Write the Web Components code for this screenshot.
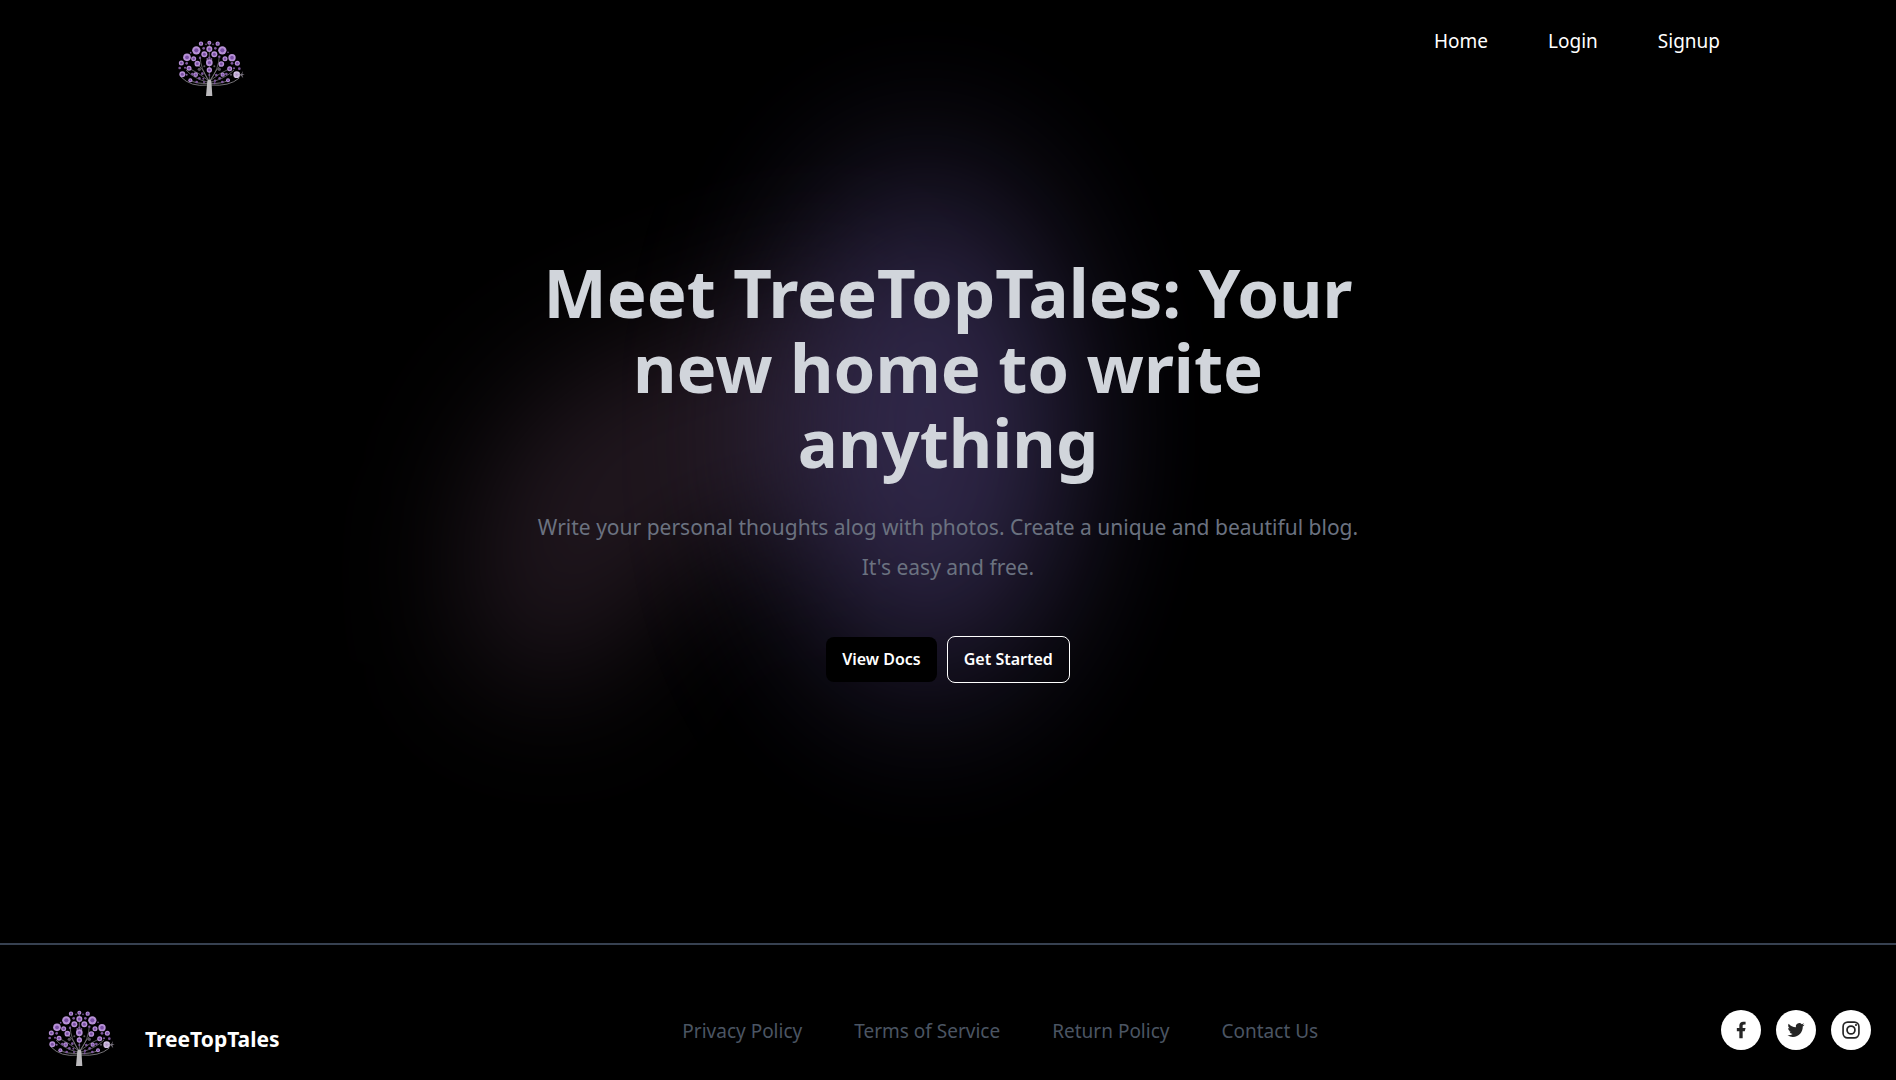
<!DOCTYPE html>
<html lang="en">
<head>
<meta charset="utf-8">
<meta name="viewport" content="width=device-width, initial-scale=1">
<title>TreeTopTales</title>
<style>
  body { margin: 0; background: #000; color: #fff; font-family: "Noto Sans", "Open Sans", sans-serif; }
</style>
</head>
<body>
<ttt-page>
  <ttt-nav slot="header"></ttt-nav>
  <ttt-hero>
    <span slot="title">Meet TreeTopTales: Your new home to write anything</span>
    <span slot="text">Write your personal thoughts alog with photos. Create a unique and beautiful blog. It's easy and free.</span>
    <ttt-button slot="actions">View Docs</ttt-button>
    <ttt-button slot="actions" outline>Get Started</ttt-button>
  </ttt-hero>
  <ttt-footer slot="footer"></ttt-footer>
</ttt-page>

<script>
  function define(name, html) {
    const template = document.createElement('template');
    template.innerHTML = html;
    customElements.define(name, class extends HTMLElement {
      constructor() {
        super();
        this.attachShadow({ mode: 'open' }).appendChild(template.content.cloneNode(true));
      }
    });
  }

  // Blossoms of the tree logo: x, y, radius
  const blossoms = [
    [123,56,6.5],[148,53,6],[173,56,6.5],[109,76,12.5],[148,72,9],[187,76,12.5],[133,88,9],[163,88,9],
    [81,97,11.5],[101,101,7.5],[195,101,7.5],[216,98,11],[64,114,7.5],[148,113,10],[112,116,8.5],[184,117,8.5],
    [232,115,7.5],[87,130,7.5],[148,135,8],[209,131,7.5],[67,148,9],[107,149,7],[188,149,6.5],[91,166,6],[204,166,6]
  ];
  const buds = [
    [59,129,4],[238,131,4],[131,70,4],[166,70,4],[92,83,2.5],[204,82,2.5],[120,99,3.5],[178,95,3.5],[138,58,2.5],[159,58,2.5],
    [80,115,4],[216,115,4],[97,147,4],[199,147,4],[127,146,4],[169,150,4],[118,160,4],[179,160,4],[110,171,4],[187,171,4],
    [130,161,3],[165,167,3.5],[75,128,3],[222,130,3],[148,98,3.5],[142,102,3],[154,102,3],[80,149,3],[132,171,3],[164,175,3],[148,150,3]
  ];
  const greyBuds = [[118,133,5],[178,133,5],[133,124,3],[163,124,3],[213,149,3]];
  const circle = (fill) => ([x, y, r]) => `<circle cx="${x}" cy="${y}" r="${r}" fill="${fill}"/>`;

  define('ttt-tree', `
    <style>
      :host { display: block; width: 67px; height: 57px; }
      svg { display: block; width: 100%; height: 100%; }
    </style>
    <svg viewBox="54 45 201 171" role="img" aria-label="TreeTopTales tree">
      <g fill="none" stroke="#8b888e" stroke-width="2">
        <path d="M146 172Q102 162 78 135M150 172Q194 162 222 135M146 168Q122 132 120 94M150 168Q176 132 178 94M147 168Q132 135 112 116M149 168Q168 135 184 117M147 168Q116 143 87 130M149 168Q180 143 209 131M148 168V60"/>
        <path d="M144 180Q92 187 62 155M152 180Q208 185 238 159M144 175Q110 177 91 166M152 175Q184 177 204 166" stroke-width="2.5"/>
      </g>
      <path d="M142 168L145 164H151L154 168L157 213H138Z" fill="#bcbabd"/>
      ${greyBuds.map(circle('#5d5562')).join('')}
      ${buds.map(circle('#7f599e')).join('')}
      ${blossoms.map(circle('#b791d6')).join('')}
      ${blossoms.map(([x, y, r]) => [x, y, r * .5]).map(circle('#7a4fa5')).join('')}
      <circle cx="230" cy="149" r="10" fill="#d4c4e4"/>
      <path d="M223 149H237M230 142V156M225 144L235 154M235 144L225 154" stroke="#a788c0" stroke-width="1.5"/>
      <path d="M237 149L244 146L249 138L247 147L254 148L247 151L250 160L243 152Z" fill="#77717c"/>
    </svg>`);

  define('ttt-nav', `
    <style>
      :host { display: block; }
      header { display: flex; align-items: flex-start; justify-content: space-between; max-width: 1544px; margin: 0 auto; padding: 25px 0 0; }
      ttt-tree { margin: 15px 0 0 2px; }
      nav { display: flex; gap: 60px; }
      a { color: #fff; text-decoration: none; font-size: 19px; line-height: 32px; }
    </style>
    <header>
      <ttt-tree></ttt-tree>
      <nav aria-label="Main">
        <a href="#home">Home</a>
        <a href="#login">Login</a>
        <a href="#signup">Signup</a>
      </nav>
    </header>`);

  define('ttt-button', `
    <style>
      :host { display: block; }
      button { display: block; margin: 0; padding: 10px 16px; border: 0; border-radius: 8px; background: #000; color: #fff;
               font: 600 16px/25px "Noto Sans", "Open Sans", sans-serif; cursor: pointer; }
      :host([outline]) button { border: 1px solid #fff; background: transparent; }
    </style>
    <button type="button"><slot></slot></button>`);

  define('ttt-glow', `
    <style>
      :host { display: block; position: absolute; inset: 0; z-index: -1; overflow: hidden; pointer-events: none; }
      svg { display: block; width: 100%; height: 100%; overflow: visible; }
    </style>
    <svg viewBox="0 0 1896 944" preserveAspectRatio="xMidYMid meet" aria-hidden="true">
      <defs>
        <filter id="soft" x="-150%" y="-100%" width="400%" height="300%" color-interpolation-filters="sRGB"><feGaussianBlur stdDeviation="74 92"/></filter>
        <filter id="wide" x="-100%" y="-100%" width="300%" height="300%" color-interpolation-filters="sRGB"><feGaussianBlur stdDeviation="66"/></filter>
      </defs>
      <path d="M480 660Q430 440 610 360L860 270L930 530Q740 500 680 570Q620 610 580 700Z" fill="#21171f" filter="url(#wide)"/>
      <ellipse cx="926" cy="430" rx="150" ry="250" fill="#342b50" opacity=".9" filter="url(#soft)"/>
    </svg>`);

  define('ttt-hero', `
    <style>
      :host { display: block; }
      section { display: flex; flex-direction: column; align-items: center; max-width: 840px; margin: 0 auto; text-align: center; }
      h1 { margin: 0; color: #d1d5db; font-size: 67px; line-height: 75px; font-weight: 700; }
      p { margin: 27px 0 0; color: #6b7280; font-size: 21px; line-height: 40px; }
      .actions { display: flex; align-items: center; gap: 10px; margin-top: 49px; }
    </style>
    <section>
      <h1><slot name="title"></slot></h1>
      <p><slot name="text"></slot></p>
      <div class="actions"><slot name="actions"></slot></div>
    </section>`);

  define('ttt-social', `
    <style>
      :host { display: flex; gap: 15px; }
      a { display: flex; align-items: center; justify-content: center; width: 40px; height: 40px; border-radius: 50%; background: #fff; color: #252525; }
      svg { display: block; width: 20px; height: 20px; fill: currentColor; }
    </style>
    <a href="#facebook" aria-label="Facebook"><svg viewBox="0 0 24 24"><path d="M14 13.5h2.5l1-4H14v-2c0-1.03 0-2 2-2h1.500V2.140C17.174 2.097 15.943 2 14.643 2 11.928 2 10 3.657 10 6.700v2.800H7v4h3V22h4v-8.500z"/></svg></a>
    <a href="#twitter" aria-label="Twitter"><svg viewBox="0 0 24 24"><path d="M22.162 5.656a8.384 8.384 0 0 1-2.402.658A4.196 4.196 0 0 0 21.600 4c-.820.488-1.719.830-2.656 1.015a4.182 4.182 0 0 0-7.126 3.814 11.874 11.874 0 0 1-8.620-4.370 4.168 4.168 0 0 0-.566 2.103c0 1.450.738 2.731 1.860 3.481a4.168 4.168 0 0 1-1.894-.523v.052a4.185 4.185 0 0 0 3.355 4.101 4.210 4.210 0 0 1-1.890.072A4.185 4.185 0 0 0 7.970 16.650a8.394 8.394 0 0 1-6.191 1.732 11.830 11.830 0 0 0 6.410 1.880c7.693 0 11.900-6.373 11.900-11.900 0-.180-.005-.362-.013-.540a8.496 8.496 0 0 0 2.087-2.165z"/></svg></a>
    <a href="#instagram" aria-label="Instagram"><svg viewBox="0 0 24 24"><path fill-rule="evenodd" d="M8 1.500h8A6.500 6.500 0 0 1 22.500 8v8a6.500 6.500 0 0 1-6.500 6.500H8A6.500 6.500 0 0 1 1.500 16V8A6.500 6.500 0 0 1 8 1.500zm0 2A4.500 4.500 0 0 0 3.500 8v8A4.500 4.500 0 0 0 8 20.500h8a4.500 4.500 0 0 0 4.500-4.500V8A4.500 4.500 0 0 0 16 3.500zM12 6.200a5.800 5.800 0 1 1 0 11.600 5.800 5.800 0 0 1 0-11.600zm0 2.100a3.700 3.700 0 1 0 0 7.400 3.700 3.700 0 0 0 0-7.400zM18 4.700a1.300 1.300 0 1 1 0 2.600 1.300 1.300 0 0 1 0-2.600z"/></svg></a>`);

  define('ttt-footer', `
    <style>
      :host { display: block; }
      footer { display: flex; align-items: flex-start; justify-content: space-between; border-top: 2px solid #374151; padding: 65px 25px 13px 48px; }
      .brand { display: flex; align-items: center; gap: 30px; font-size: 21px; line-height: 32px; font-weight: 700; }
      nav { display: flex; gap: 52px; padding-top: 5px; }
      nav a { color: #4b5563; text-decoration: none; font-size: 19px; line-height: 32px; }
    </style>
    <footer>
      <div class="brand"><ttt-tree></ttt-tree><span>TreeTopTales</span></div>
      <nav aria-label="Legal">
        <a href="#privacy">Privacy Policy</a>
        <a href="#terms">Terms of Service</a>
        <a href="#returns">Return Policy</a>
        <a href="#contact">Contact Us</a>
      </nav>
      <ttt-social></ttt-social>
    </footer>`);

  define('ttt-page', `
    <style>
      :host { display: flex; flex-direction: column; min-height: 100vh; background: #000; }
      main { position: relative; z-index: 0; display: flex; flex-direction: column; flex: 1; }
      .center { flex: 1; display: flex; flex-direction: column; justify-content: center; padding-bottom: 103px; }
    </style>
    <main>
      <ttt-glow></ttt-glow>
      <slot name="header"></slot>
      <div class="center"><slot></slot></div>
    </main>
    <slot name="footer"></slot>`);
</script>
</body>
</html>
